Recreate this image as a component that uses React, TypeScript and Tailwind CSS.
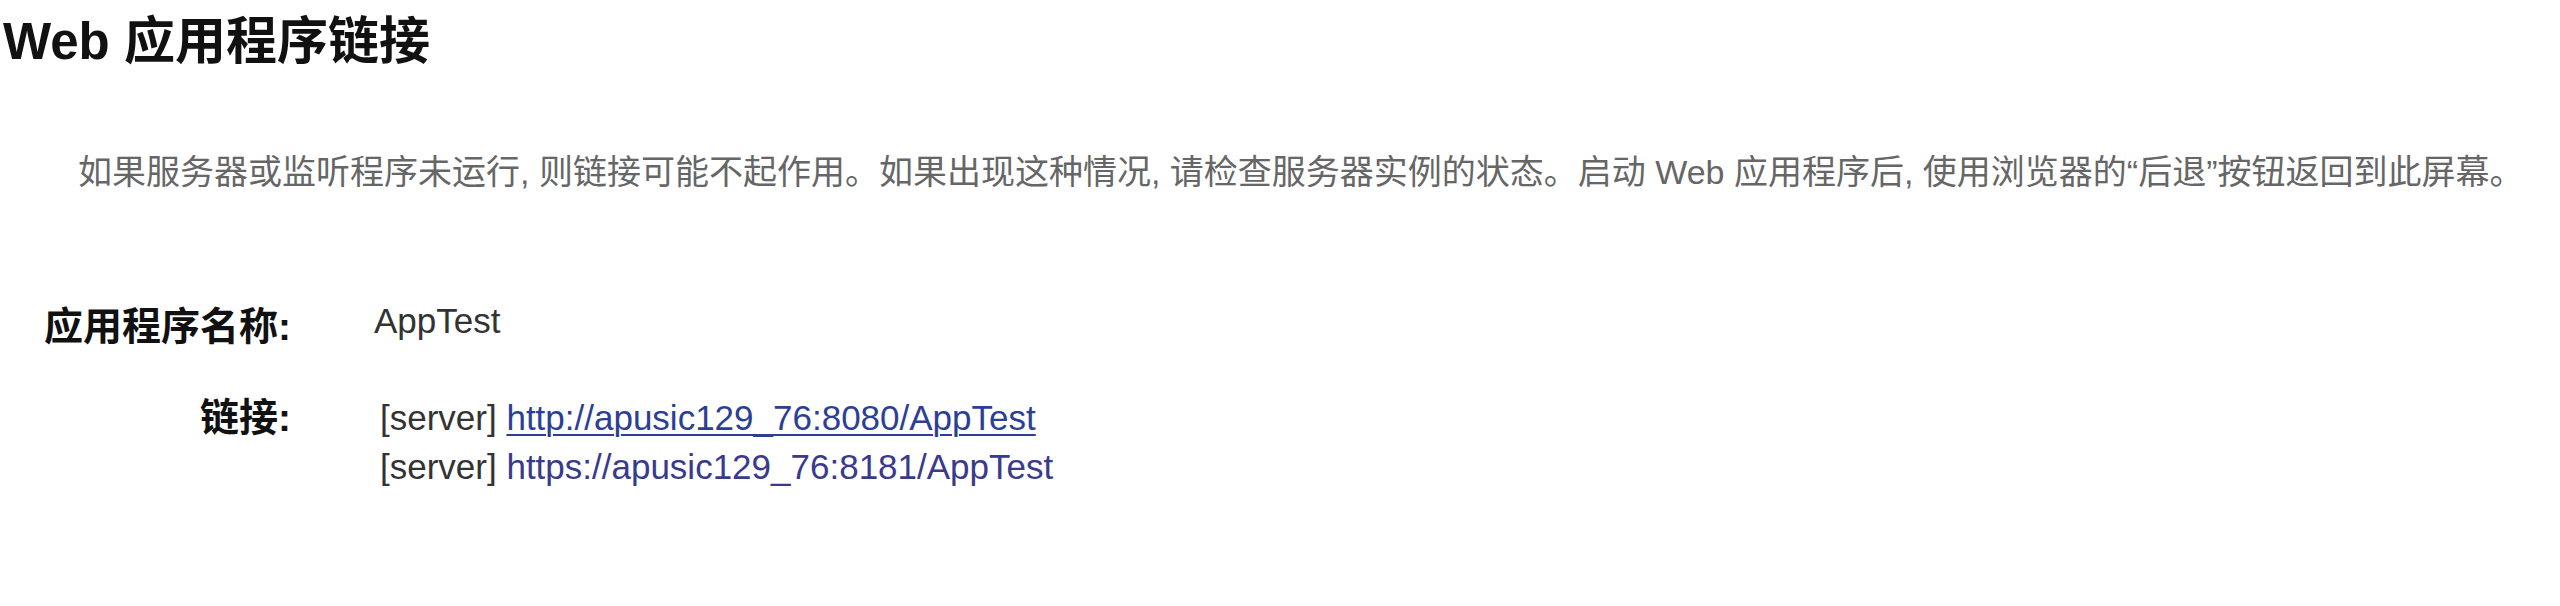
import React from "react";

const FONT = '"Liberation Sans", Arial, "Noto Sans CJK SC", sans-serif';

export default function App() {
  return (
    <div className="w-full h-[606px] bg-white overflow-hidden" style={{ fontFamily: FONT }}>
      <h1 className="pt-[12px] pl-[3px] text-[51px] leading-[60px] font-bold text-[#111]">
        Web 应用程序链接
      </h1>
      <p className="mt-[76px] pl-[78px] text-[34px] leading-[48px] text-[#666] whitespace-nowrap">
        如果服务器或监听程序未运行, 则链接可能不起作用。如果出现这种情况, 请检查服务器实例的状态。启动 Web 应用程序后, 使用浏览器的“后退”按钮返回到此屏幕。
      </p>
      <div className="mt-[107px] grid grid-cols-[291px_auto] gap-x-[83px] gap-y-[42px] items-start">
        <div className="text-right text-[39px] leading-[48px] font-bold text-[#111]">应用程序名称:</div>
        <div className="pt-[1px] text-[35px] leading-[34px] text-[#333]">AppTest</div>
        <div className="text-right text-[39px] leading-[49px] font-bold text-[#111]">链接:</div>
        <div className="pl-[6px] flex flex-col text-[35px] leading-[49px] text-[#333]">
          <div>
            [server] <a className="text-[#2b3f96] underline decoration-[2px] underline-offset-[4px]">http://apusic129_76:8080/AppTest</a>
          </div>
          <div>
            [server] <a className="text-[#3a3a8c]">https://apusic129_76:8181/AppTest</a>
          </div>
        </div>
      </div>
    </div>
  );
}
